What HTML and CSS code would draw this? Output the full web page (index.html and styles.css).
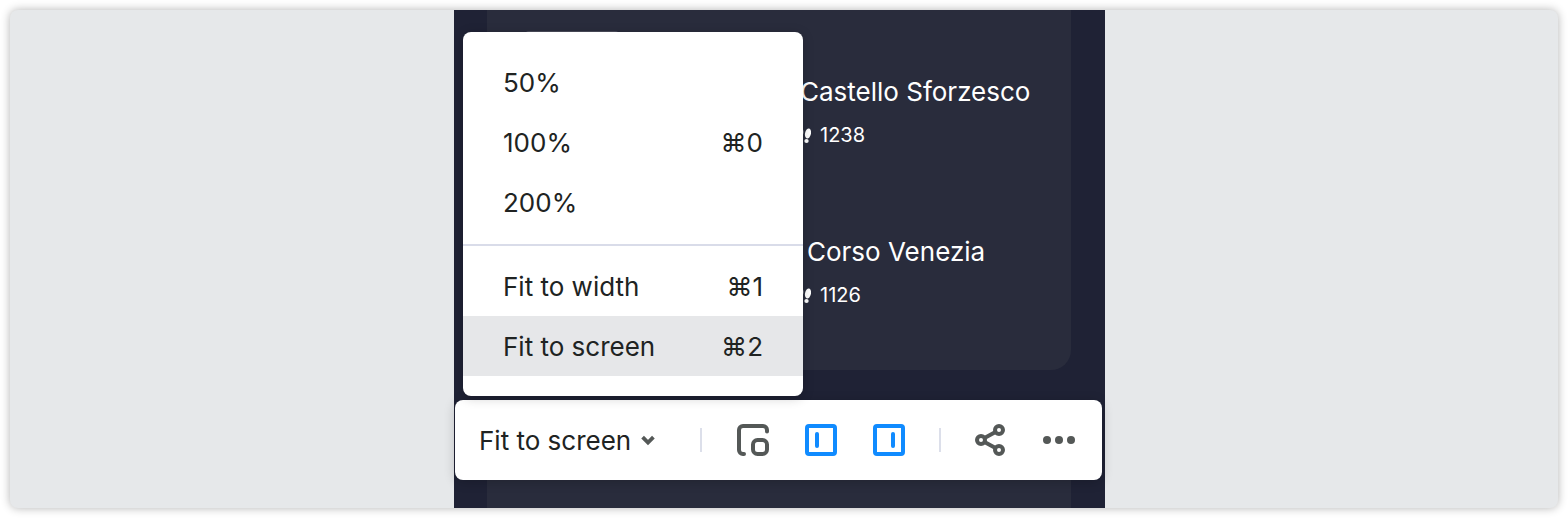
FILE: index.html
```html
<!DOCTYPE html>
<html lang="en">
<head>
<meta charset="utf-8">
<title>Preview</title>
<link rel="stylesheet" href="styles.css">
</head>
<body>
<main class="stage">
  <section class="device">
    <div class="card card-main">
      <div class="thumb"></div>
      <ul class="places">
        <li class="place place-wide">
          <h2 class="place-name">Castello Sforzesco</h2>
          <p class="steps"><svg class="feet" viewBox="0 0 18 18" aria-hidden="true"><g fill="#fff"><ellipse cx="7.500" cy="6" rx="2.800" ry="4.600"/><ellipse cx="7.800" cy="13" rx="2" ry="2"/><ellipse cx="15" cy="7.500" rx="3" ry="5" transform="rotate(12 15 7.500)"/><ellipse cx="13.500" cy="15" rx="2.200" ry="2.100"/></g></svg>1238</p>
        </li>
        <li class="place">
          <h2 class="place-name">Corso Venezia</h2>
          <p class="steps"><svg class="feet" viewBox="0 0 18 18" aria-hidden="true"><g fill="#fff"><ellipse cx="7.500" cy="6" rx="2.800" ry="4.600"/><ellipse cx="7.800" cy="13" rx="2" ry="2"/><ellipse cx="15" cy="7.500" rx="3" ry="5" transform="rotate(12 15 7.500)"/><ellipse cx="13.500" cy="15" rx="2.200" ry="2.100"/></g></svg>1126</p>
        </li>
      </ul>
    </div>
    <div class="card card-next"></div>

    <div class="toolbar" role="toolbar" aria-label="View">
      <button class="zoom" type="button" aria-haspopup="menu">Fit to screen
        <svg class="caret" viewBox="0 0 14 14" aria-hidden="true"><path d="M1.600 4.200 7 9.600l5.400-5.400" fill="none" stroke="#545857" stroke-width="3.800"/></svg>
      </button>
      <span class="rule"></span>
      <div class="panels">
        <button class="tool" type="button" aria-label="Mini preview"><svg viewBox="0 0 34 34" aria-hidden="true"><g fill="none" stroke="#545857" stroke-width="4" stroke-linecap="round"><path d="M31 8.500V7a4 4 0 0 0-4-4H7a4 4 0 0 0-4 4v20a4 4 0 0 0 4 4h1"/><rect x="17" y="17" width="14" height="14" rx="4.500"/></g></svg></button>
        <button class="tool" type="button" aria-label="Left panel"><svg viewBox="0 0 34 34" aria-hidden="true"><g fill="none" stroke="#108bff" stroke-width="4" stroke-linecap="round"><rect x="3" y="3" width="28" height="28" rx="2"/><path d="M13 11v12"/></g></svg></button>
        <button class="tool" type="button" aria-label="Right panel"><svg viewBox="0 0 34 34" aria-hidden="true"><g fill="none" stroke="#108bff" stroke-width="4" stroke-linecap="round"><rect x="3" y="3" width="28" height="28" rx="2"/><path d="M21 11v12"/></g></svg></button>
      </div>
      <span class="rule"></span>
      <div class="actions">
        <button class="tool" type="button" aria-label="Share"><svg viewBox="0 0 34 34" aria-hidden="true"><g fill="none" stroke="#545857" stroke-width="4"><circle cx="7" cy="17" r="4"/><circle cx="25" cy="7" r="4"/><circle cx="25" cy="27" r="4"/><path d="m10.500 15 11-6M10.500 19l11 6"/></g></svg></button>
        <button class="tool" type="button" aria-label="More"><svg viewBox="0 0 34 34" aria-hidden="true"><g fill="#545857"><circle cx="5" cy="17" r="4"/><circle cx="17" cy="17" r="4"/><circle cx="29" cy="17" r="4"/></g></svg></button>
      </div>
    </div>

    <div class="menu" role="menu" aria-label="Zoom">
      <button class="item" type="button" role="menuitem">50%</button>
      <button class="item" type="button" role="menuitem">100%<kbd class="key">⌘0</kbd></button>
      <button class="item" type="button" role="menuitem">200%</button>
      <hr class="divider">
      <button class="item" type="button" role="menuitem">Fit to width<kbd class="key">⌘1</kbd></button>
      <button class="item item-active" type="button" role="menuitem">Fit to screen<kbd class="key">⌘2</kbd></button>
    </div>
  </section>
</main>
</body>
</html>
```
FILE: styles.css
```css
* { box-sizing: border-box; }

body {
  margin: 0;
  padding: 10px;
  min-height: 100vh;
  display: flex;
  background: #fff;
  color: #202322;
  font-family: Inter, "Noto Sans", sans-serif;
}

button {
  border: 0;
  padding: 0;
  background: none;
  color: inherit;
  font: inherit;
}

.stage {
  flex: 1;
  display: flex;
  justify-content: center;
  padding-right: 9px;
  border-radius: 8px;
  background: #e6e8ea;
  box-shadow: 0 0 10px rgba(0, 0, 0, 0.3);
}

.device {
  position: relative;
  width: 651px;
  display: flex;
  flex-direction: column;
  gap: 32px;
  padding: 0 34px 0 33px;
  background: #1f2235;
}

.card { background: #292c3c; }

.card-main {
  height: 360px;
  padding: 21px 38px 0;
  border-radius: 0 0 20px 20px;
}

.card-next {
  flex: 1;
  border-radius: 20px 20px 0 0;
}

.thumb {
  width: 94px;
  height: 40px;
  border-radius: 4px;
  background: #4a4c5b;
}

.places {
  margin: 0;
  padding: 0 0 0 275px;
  list-style: none;
}

.place { height: 160px; }
.place:first-child { margin-top: -8px; }

.place-name {
  margin: 0 0 0 7px;
  padding-top: 2px;
  color: #fff;
  font-size: 26px;
  font-weight: 400;
  line-height: 54px;
  white-space: nowrap;
}

.place-wide .place-name { margin-left: 0; }

.steps {
  display: flex;
  align-items: center;
  gap: 9px;
  margin: 0;
  padding: 0;
  color: #fff;
  font-size: 20px;
  line-height: 32px;
}

.feet { width: 18px; height: 18px; margin-left: -7px; }

.toolbar {
  position: absolute;
  left: 1px;
  right: 3px;
  bottom: 28px;
  height: 80px;
  display: flex;
  align-items: center;
  justify-content: space-between;
  padding: 0 26px 0 24px;
  border-radius: 8px;
  background: #fff;
  box-shadow: 0 2px 12px rgba(0, 0, 0, 0.2);
}

.zoom {
  display: flex;
  align-items: center;
  gap: 10px;
  margin-right: 12px;
  font-size: 26px;
}

.caret { width: 14px; height: 14px; }

.rule {
  width: 2px;
  height: 24px;
  background: #dcdfea;
}

.panels,
.actions {
  display: flex;
  gap: 34px;
}

.tool,
.tool svg {
  display: block;
  width: 34px;
  height: 34px;
}

.menu {
  position: absolute;
  left: 9px;
  top: 22px;
  width: 340px;
  padding: 20px 0;
  border-radius: 8px;
  background: #fff;
  box-shadow: 0 2px 12px rgba(0, 0, 0, 0.2);
}

.item {
  width: 100%;
  height: 60px;
  display: flex;
  align-items: center;
  justify-content: space-between;
  padding: 0 40px;
  font-size: 26px;
  text-align: left;
}

.item-active { background: #e6e7e9; }

.key { font: inherit; }

.divider {
  height: 2px;
  margin: 12px 0 10px;
  border: 0;
  background: #d9dce9;
}
```
